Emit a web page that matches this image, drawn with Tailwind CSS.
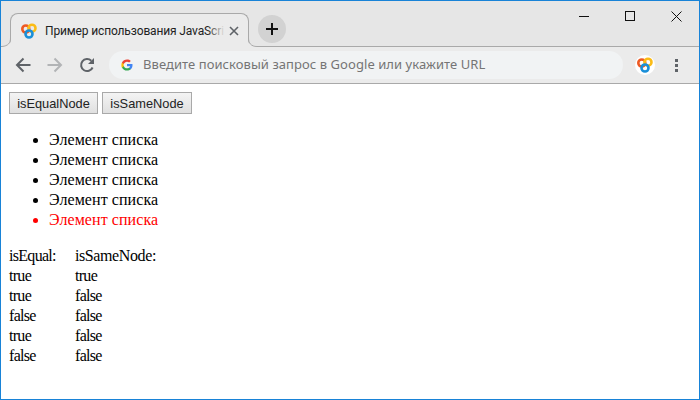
<!DOCTYPE html>
<html lang="ru">
<head>
<meta charset="UTF-8">
<title>Пример использования JavaScript</title>
<script src="https://cdn.jsdelivr.net/npm/@tailwindcss/browser@4"></script>
</head>
<body class="bg-white overflow-hidden">
<div class="w-[700px] h-[400px] flex flex-col border border-[#1883d7] bg-white overflow-hidden">

  <!-- tab strip -->
  <div class="h-[46px] shrink-0 bg-[#e6e6e6] flex items-end relative border-b border-[#a9a9a9]">
    <div class="relative z-10 ml-[9px] w-[239px] h-[34px] -mb-px bg-[#ebebeb] border border-b-0 border-[#a9a9a9] rounded-t-[8px] flex items-center pl-[10px] pr-[9px]">
      <!-- flared tab corners -->
      <svg class="absolute left-[-9px] bottom-0" width="9" height="9" viewBox="0 0 9 9" fill="#ebebeb" stroke="none"><path d="M9 0C9 6 7 8 0 8v1h9z"/><path d="M8.500 0C8.500 5 6 8 0 8.500" fill="none" stroke="#a9a9a9"/></svg>
      <svg class="absolute right-[-9px] bottom-0" width="9" height="9" viewBox="0 0 9 9" fill="#ebebeb" stroke="none"><path d="M0 0C0 6 2 8 9 8v1H0z"/><path d="M.5 0C.5 5 3 8.500 9 8.500" fill="none" stroke="#a9a9a9"/></svg>
      <svg class="shrink-0" width="16" height="16" viewBox="0 0 16 16" fill="none">
        <circle cx="4.800" cy="6" r="3.500" stroke="#ee5a24" stroke-width="2.600"/>
        <circle cx="11" cy="5.200" r="3.500" stroke="#fbbc16" stroke-width="2.600"/>
        <circle cx="8" cy="11" r="3.500" stroke="#1a8fd8" stroke-width="2.600"/>
      </svg>
      <div class="relative ml-[8px] w-[180px] overflow-hidden whitespace-nowrap font-['Roboto',sans-serif] text-[12px] tracking-[-0.14px] text-[#222]">
        Пример использования JavaScri
        <div class="absolute right-0 top-0 bottom-0 w-[18px] bg-gradient-to-r from-transparent to-[#ebebeb]"></div>
      </div>
      <svg class="ml-auto shrink-0" width="10" height="10" viewBox="0 0 10 10" stroke="#5f6368" stroke-width="1.600"><path d="M1 1l8 8M9 1l-8 8"/></svg>
    </div>
    <div class="ml-[9px] mb-[3px] w-[28px] h-[28px] rounded-full bg-[#d2d2d2] flex items-center justify-center">
      <svg width="12" height="12" viewBox="0 0 12 12" stroke="#111" stroke-width="2"><path d="M6 0v12M0 6h12"/></svg>
    </div>
    <!-- window controls -->
    <div class="absolute right-0 top-0 flex h-[30px] items-center">
      <div class="w-[46px] flex justify-center"><svg width="10" height="10" viewBox="0 0 10 10" stroke="#111"><path d="M0 5.500h10"/></svg></div>
      <div class="w-[46px] flex justify-center"><svg width="10" height="10" viewBox="0 0 10 10" stroke="#111" fill="none"><rect x=".5" y=".5" width="9" height="9"/></svg></div>
      <div class="w-[46px] flex justify-center"><svg width="11" height="11" viewBox="0 0 11 11" stroke="#111"><path d="M.5.5l10 10M10.500.5l-10 10"/></svg></div>
    </div>
  </div>

  <!-- toolbar -->
  <div class="h-[37px] shrink-0 bg-[#ebebeb] border-b border-[#a9a9a9] flex items-center pl-[14px] pr-[14px]">
    <svg width="16" height="16" viewBox="0 0 16 16" fill="none" stroke="#5f6368" stroke-width="2"><path d="M15.500 8H2M8.500 1.500L2 8l6.500 6.500"/></svg>
    <svg class="ml-[16px]" width="16" height="16" viewBox="0 0 16 16" fill="none" stroke="#b2b4b6" stroke-width="2"><path d="M.5 8H14M7.500 1.500L14 8l-6.500 6.500"/></svg>
    <svg class="ml-[16px]" width="16" height="16" viewBox="0 0 16 16" fill="none"><path d="M13.600 10.500A6 6 0 1 1 12.300 3.800" stroke="#5f6368" stroke-width="2"/><path d="M15 1v6H9z" fill="#5f6368"/></svg>
    <div class="ml-[14px] w-[514px] h-[28px] rounded-full bg-[#f1f3f4] flex items-center pl-[12px]">
      <svg width="12" height="12" viewBox="0 0 48 48">
        <path fill="#4285f4" d="M46 24.500c0-1.600-.1-3.100-.4-4.500H24v8.500h12.400c-.5 2.800-2.100 5.200-4.500 6.800v5.700h7.300C43.500 36.900 46 31.200 46 24.500z"/>
        <path fill="#34a853" d="M24 46c6.100 0 11.300-2 15.100-5.500l-7.300-5.700c-2 1.400-4.600 2.200-7.800 2.200-5.900 0-10.900-4-12.700-9.300H3.800v5.800C7.500 40.900 15.200 46 24 46z"/>
        <path fill="#fbbc05" d="M11.300 28.700c-.5-1.400-.7-2.900-.7-4.700s.3-3.300.7-4.700v-5.800H3.800C2.300 16.500 1.500 20.100 1.500 24s.8 7.500 2.300 10.500z"/>
        <path fill="#ea4335" d="M24 10.700c3.300 0 6.300 1.100 8.600 3.400l6.500-6.500C35.300 4 30.100 2 24 2 15.200 2 7.500 7.100 3.800 14.500l7.500 5.800c1.800-5.500 6.800-9.600 12.700-9.600z"/>
      </svg>
      <span class="ml-[10px] font-['Noto_Sans',sans-serif] text-[13px] tracking-[0.06px] text-[#757575] whitespace-nowrap">Введите поисковый запрос в Google или укажите URL</span>
    </div>
    <div class="ml-[12px] w-[20px] h-[20px] rounded-full bg-white flex items-center justify-center">
      <svg width="16" height="16" viewBox="0 0 16 16" fill="none">
        <circle cx="4.800" cy="6" r="3.500" stroke="#ee5a24" stroke-width="2.600"/>
        <circle cx="11" cy="5.200" r="3.500" stroke="#fbbc16" stroke-width="2.600"/>
        <circle cx="8" cy="11" r="3.500" stroke="#1a8fd8" stroke-width="2.600"/>
      </svg>
    </div>
    <div class="ml-[20px] flex flex-col gap-[2px]">
      <div class="w-[3px] h-[3px] bg-[#5f6368]"></div>
      <div class="w-[3px] h-[3px] bg-[#5f6368]"></div>
      <div class="w-[3px] h-[3px] bg-[#5f6368]"></div>
    </div>
  </div>

  <!-- page content -->
  <div class="flex-1 p-[8px] font-['Liberation_Serif',serif] text-[16px] leading-[20px] text-black">
    <div class="flex gap-[4px] font-['Liberation_Sans',sans-serif] text-[12.8px] leading-[15px] text-[#222]">
      <button class="h-[22px] w-[89px] bg-gradient-to-b from-[#f4f4f4] to-[#e0e0e0] border border-[#a9a9a9]">isEqualNode</button>
      <button class="h-[22px] w-[90px] bg-gradient-to-b from-[#f4f4f4] to-[#e0e0e0] border border-[#a9a9a9]">isSameNode</button>
    </div>
    <ul class="my-[16px] pl-[40px] list-disc tracking-[0.07px]">
      <li>Элемент списка</li>
      <li>Элемент списка</li>
      <li>Элемент списка</li>
      <li>Элемент списка</li>
      <li class="text-[#ff0000]">Элемент списка</li>
    </ul>
    <div class="grid grid-cols-[66px_1fr] tracking-[-0.7px]">
      <div>isEqual:</div><div class="tracking-[-0.4px]">isSameNode:</div>
      <div>true</div><div>true</div>
      <div>true</div><div>false</div>
      <div>false</div><div>false</div>
      <div>true</div><div>false</div>
      <div>false</div><div>false</div>
    </div>
  </div>
</div>
</body>
</html>
